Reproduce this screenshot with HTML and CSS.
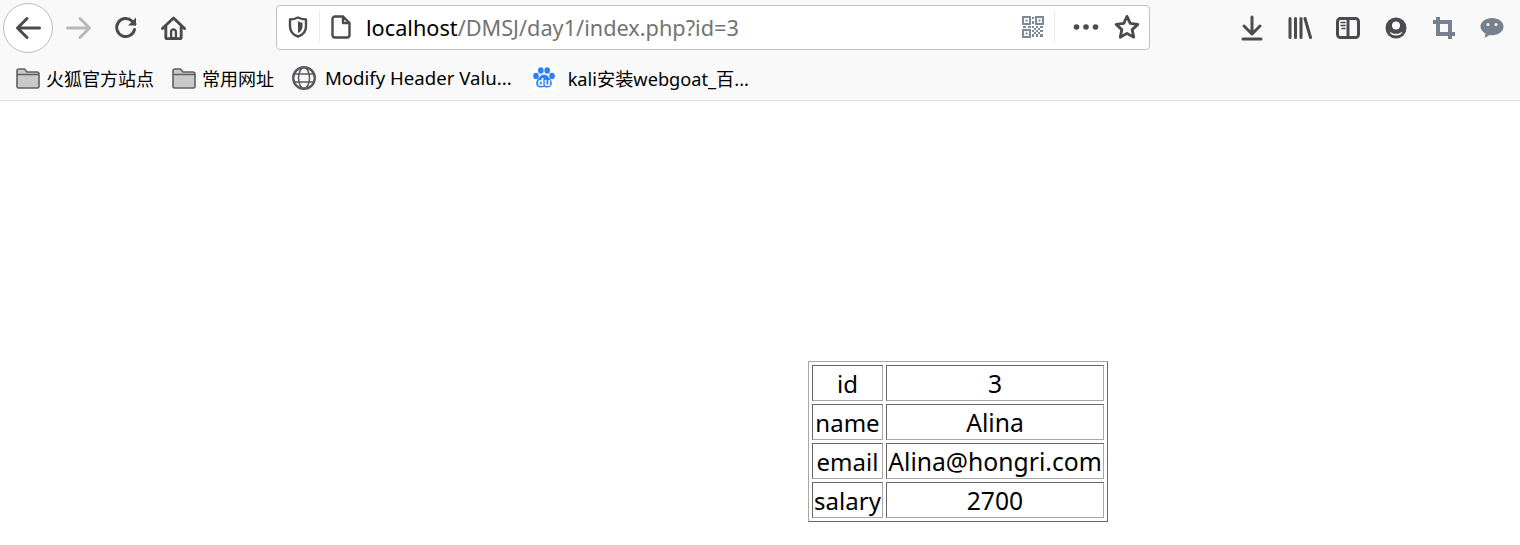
FILE: index.html
```html
<!DOCTYPE html>
<html lang="en">

<head>
  <meta charset="UTF-8">
  <title>localhost/DMSJ/day1/index.php?id=3</title>
  <link rel="stylesheet" href="styles.css">
</head>

<body>
  <header class="chrome">
    <div class="nav-bar">
      <button class="back-btn">
        <svg width="28" height="28" viewBox="0 0 28 28"><path d="M25.5 14H3.5M13 4.5L3.5 14l9.500 9.500" class="line dark"/></svg>
      </button>
      <span class="tool">
        <svg width="28" height="28" viewBox="0 0 28 28"><path d="M2.5 14h22M15 4.5l9.500 9.500-9.500 9.500" class="line faded"/></svg>
      </span>
      <span class="tool tool-reload">
        <svg width="24" height="24" viewBox="0 0 24 24"><path d="M20.500 13.500a9 9 0 1 1-2.600-8.500l3.100 3" class="line dark"/><path d="M22 1.500v8h-8z" fill="#4a4a4f"/></svg>
      </span>
      <span class="tool tool-home">
        <svg width="25" height="25" viewBox="0 0 26 26"><path d="M1.500 13L13 2l11.500 11M5 10.500V22a1.500 1.500 0 0 0 1.500 1.500h13A1.500 1.500 0 0 0 21 22V10.500" class="line dark"/><path d="M10.500 23v-6.500a2.500 2.500 0 0 1 5 0V23z" class="line thin"/></svg>
      </span>

      <div class="url-bar">
        <span class="url-shield">
          <svg width="20" height="22" viewBox="0 0 20 22"><path d="M10 1.500c3 1.500 5.500 2 8 2v7c0 5-3.500 8.500-8 10-4.500-1.500-8-5-8-10v-7c2.500 0 5-.5 8-2z" class="line thin"/><path d="M10 5v12c-2.500-1.200-4.500-3.500-4.500-6.500V6.500c1.700 0 3-.5 4.500-1.500z" fill="#4a4a4f" transform="matrix(-1 0 0 1 20 0)"/></svg>
        </span>
        <span class="url-sep"></span>
        <span class="url-page">
          <svg width="20" height="24" viewBox="0 0 20 24"><path d="M4 1.500h8l6.500 6.500v12.500a2.500 2.500 0 0 1-2.500 2H4a2.500 2.500 0 0 1-2.500-2v-16.500a2.500 2.500 0 0 1 2.500-2.500zM12 1.500v6.500h6.500" class="line thin"/></svg>
        </span>
        <span class="url-text"><b>localhost</b>/DMSJ/day1/index.php?id=3</span>
        <span class="url-qr">
          <svg width="22" height="22" viewBox="0 0 22 22" fill="#7f8a99"><path d="M0 0h9v9H0zM2 2v5h5V2zM13 0h9v9h-9zM15 2v5h5V2zM0 13h9v9H0zM2 15v5h5v-5z" fill-rule="evenodd"/><path d="M3.500 3.500h2v2h-2zM16.500 3.500h2v2h-2zM3.500 16.500h2v2h-2zM10 1h2v2h-2zM10 5h2v3h-2zM1 10h3v2H1zM6 10h3v2H6zM10 10h2v2h-2zM14 10h2v2h-2zM18 10h3v2h-3zM12 12h2v2h-2zM16 12h2v2h-2zM10 14h2v2h-2zM14 14h2v2h-2zM18 14h3v2h-3zM12 16h2v2h-2zM16 16h2v2h-2zM10 18h2v3h-2zM14 18h2v3h-2zM18 18h3v3h-3z"/></svg>
        </span>
        <span class="url-sep url-sep-right"></span>
        <span class="url-dots">
          <svg width="26" height="6" viewBox="0 0 26 6" fill="#4a4a4f"><circle cx="3.500" cy="3" r="2.800"/><circle cx="13" cy="3" r="2.800"/><circle cx="22.500" cy="3" r="2.800"/></svg>
        </span>
        <span class="url-star">
          <svg width="26" height="26" viewBox="0 0 24 24"><path d="M12 2.200l3 6.500 7 .9-5.200 4.800 1.400 7L12 17.900l-6.200 3.500 1.400-7L2 9.600l7-.9z" class="line star"/></svg>
        </span>
      </div>

      <div class="tools-right">
        <span class="tool">
          <svg width="24" height="26" viewBox="0 0 24 26"><path d="M12 2v16M4 11l8 8 8-8" class="line dark"/><path d="M3 24h18" class="line dark"/></svg>
        </span>
        <span class="tool">
          <svg width="24" height="24" viewBox="0 0 24 24"><path d="M2 2.500v19M7.500 2.500v19M13 2.500v19M17 2.500l5.500 19" class="line dark"/></svg>
        </span>
        <span class="tool">
          <svg width="24" height="22" viewBox="0 0 24 22"><rect x="1.500" y="1.500" width="21" height="19" rx="3" class="line dark"/><path d="M12 1.500v19" class="line dark"/><path d="M5 5.500h4M5 8.500h4M6 11.500h3" class="line hair"/></svg>
        </span>
        <span class="tool">
          <svg width="22" height="22" viewBox="0 0 22 22"><circle cx="11" cy="11" r="10.500" fill="#4a4a4f"/><circle cx="11" cy="8.500" r="4" fill="#f9f9fa"/><path d="M4.500 14.500c2 1.500 4 2.300 6.500 2.300s4.500-.8 6.500-2.300c-1 3-3.500 4-6.500 4s-5.500-1-6.500-4z" fill="#f9f9fa"/></svg>
        </span>
        <span class="tool">
          <svg width="22" height="22" viewBox="0 0 22 22"><path d="M5 0v17h17M0 5h17v17" fill="none" stroke="#77808f" stroke-width="4"/></svg>
        </span>
        <span class="tool">
          <svg width="24" height="22" viewBox="0 0 24 22"><path d="M12 1C5.500 1 .5 4.800.5 9.500c0 3 2 5.500 5 7L4.500 21l5-3c.8.100 1.700.2 2.500.2 6.500 0 11.500-3.900 11.500-8.700S18.500 1 12 1z" fill="#77808f"/><circle cx="8" cy="7.500" r="1.500" fill="#f9f9fa"/><circle cx="16" cy="7.500" r="1.500" fill="#f9f9fa"/></svg>
        </span>
      </div>
    </div>

    <div class="bookmarks">
      <a class="bm bm-first">
        <svg class="folder" width="24" height="21" viewBox="0 0 24 21"><path d="M1 18.500V3a2 2 0 0 1 2-2h5.500l2.500 3h10a2 2 0 0 1 2 2v12.500a1.500 1.500 0 0 1-1.500 1.500h-19A1.500 1.500 0 0 1 1 18.500zM1 6.500h22" class="folder-path"/></svg>
        <span>火狐官方站点</span>
      </a>
      <a class="bm bm-second">
        <svg class="folder" width="24" height="21" viewBox="0 0 24 21"><path d="M1 18.500V3a2 2 0 0 1 2-2h5.500l2.500 3h10a2 2 0 0 1 2 2v12.500a1.500 1.500 0 0 1-1.500 1.500h-19A1.500 1.500 0 0 1 1 18.500zM1 6.500h22" class="folder-path"/></svg>
        <span>常用网址</span>
      </a>
      <a class="bm bm-third">
        <svg class="globe" width="24" height="24" viewBox="0 0 24 24"><circle cx="12" cy="12" r="10.800" class="line globe-ring"/><ellipse cx="12" cy="12" rx="5.500" ry="10.500" class="line globe-grid"/><path d="M2.500 8h19M2.500 16h19" class="line globe-grid"/></svg>
        <span>Modify Header Valu...</span>
      </a>
      <a class="bm bm-fourth">
        <svg class="baidu" width="24" height="24" viewBox="0 0 24 24"><rect width="24" height="24" fill="#fff"/><g fill="#2f80f5"><ellipse cx="4" cy="10" rx="2.800" ry="3.300"/><ellipse cx="8.800" cy="4.500" rx="2.800" ry="3.300"/><ellipse cx="15.200" cy="4.500" rx="2.800" ry="3.300"/><ellipse cx="20" cy="10" rx="2.800" ry="3.300"/><path d="M12 8.500c3.500 0 4.500 3 6.500 5 2.500 3 1.500 8-3 8-1.500 0-2.500-.5-3.500-.5s-2 .5-3.500.5c-4.500 0-5.500-5-3-8 2-2 3-5 6.500-5z"/></g><text x="12" y="20" class="baidu-text">du</text></svg>
        <span>kali安装webgoat_百...</span>
      </a>
    </div>
  </header>

  <main class="page">
    <table class="info">
      <tr><td class="key">id</td><td class="val">3</td></tr>
      <tr><td class="key">name</td><td class="val">Alina</td></tr>
      <tr><td class="key">email</td><td class="val">Alina@hongri.com</td></tr>
      <tr><td class="key">salary</td><td class="val">2700</td></tr>
    </table>
  </main>
</body>

</html>
```

FILE: styles.css
```css
* {
  margin: 0;
  padding: 0;
  box-sizing: border-box;
}

body {
  background: #fff;
  color: #000;
  font-family: "Noto Sans", "Noto Sans CJK SC", sans-serif;
  overflow: hidden;
}

.chrome {
  height: 101px;
  background: #f9f9fa;
  border-bottom: 1px solid #e0e0e2;
}

svg {
  display: block;
}

.line {
  fill: none;
  stroke: #4a4a4f;
  stroke-width: 3;
  stroke-linecap: round;
  stroke-linejoin: round;
}

.line.faded {
  stroke: #b8b8ba;
}

.line.thin {
  stroke-width: 2.4;
}

.line.hair {
  stroke-width: 1.500;
}

.line.star {
  stroke-width: 2.600;
}

.line.globe-ring {
  stroke: #5a5a5e;
  stroke-width: 2.400;
}

.line.globe-grid {
  stroke: #5a5a5e;
  stroke-width: 1.500;
}

/* top row */
.nav-bar {
  display: flex;
  align-items: center;
  height: 56px;
  padding-left: 3px;
}

.back-btn {
  display: flex;
  align-items: center;
  justify-content: center;
  width: 50px;
  height: 50px;
  margin-top: -1px;
  margin-right: 2px;
  background: #fff;
  border: 1px solid #bdbdbd;
  border-radius: 50%;
}

.tool {
  display: flex;
  align-items: center;
  justify-content: center;
  width: 48px;
  height: 48px;
}

.tool-reload {
  margin-left: -1px;
}

.tool-home {
  width: 46px;
}

.url-bar {
  display: flex;
  align-items: center;
  width: 874px;
  height: 45px;
  margin-left: 80px;
  margin-bottom: 2px;
  background: #fff;
  border: 1px solid #c2c2c4;
  border-radius: 4px;
}

.url-shield {
  margin-left: 11px;
}

.url-sep {
  width: 1px;
  height: 32px;
  margin-left: 11px;
  background: #ececee;
}

.url-page {
  margin-left: 11px;
}

.url-text {
  margin-left: 15px;
  font-size: 21.7px;
  color: #737373;
  white-space: nowrap;
  width: 646px;
}

.url-text b {
  font-weight: 400;
  color: #000;
}

.url-sep-right {
  margin-left: 10px;
}

.url-qr {
  margin-left: 10px;
}

.url-dots {
  margin-left: 18px;
}

.url-star {
  margin-left: 15px;
}

.tools-right {
  display: flex;
  margin-left: 78px;
}

/* bookmarks row */
.bookmarks {
  display: flex;
  align-items: center;
  height: 44px;
  font-size: 18px;
  white-space: nowrap;
}

.bm {
  display: flex;
  align-items: center;
}

.bm-first {
  margin-left: 16px;
}

.bm-second {
  margin-left: 18px;
}

.bm-third {
  margin-left: 18px;
  font-size: 18.6px;
}

.bm-third span {
  margin-top: -2px;
}

.bm-fourth {
  margin-left: 20px;
  font-size: 18.2px;
}

.folder {
  margin-right: 6px;
}

.folder-path {
  fill: #c9c9ca;
  stroke: #5f5f63;
  stroke-width: 1.600;
  stroke-linejoin: round;
}

.globe {
  margin-right: 9px;
}

.baidu {
  margin-right: 12px;
}

.baidu-text {
  fill: #fff;
  font-size: 10px;
  font-weight: 700;
  text-anchor: middle;
}

/* page body */
.page {
  padding: 260px 0 0 808px;
}

.info {
  width: 300px;
  border: 1px solid;
  border-color: #a8a8a8 #666 #666 #a8a8a8;
  border-spacing: 3px;
  table-layout: fixed;
  font-size: 24px;
}

.info td {
  height: 36px;
  border: 1px solid;
  border-color: #666 #a8a8a8 #a8a8a8 #666;
  text-align: center;
  white-space: nowrap;
}

.key {
  width: 71px;
}

.val {
  width: 218px;
  font-size: 24.7px;
}
```
